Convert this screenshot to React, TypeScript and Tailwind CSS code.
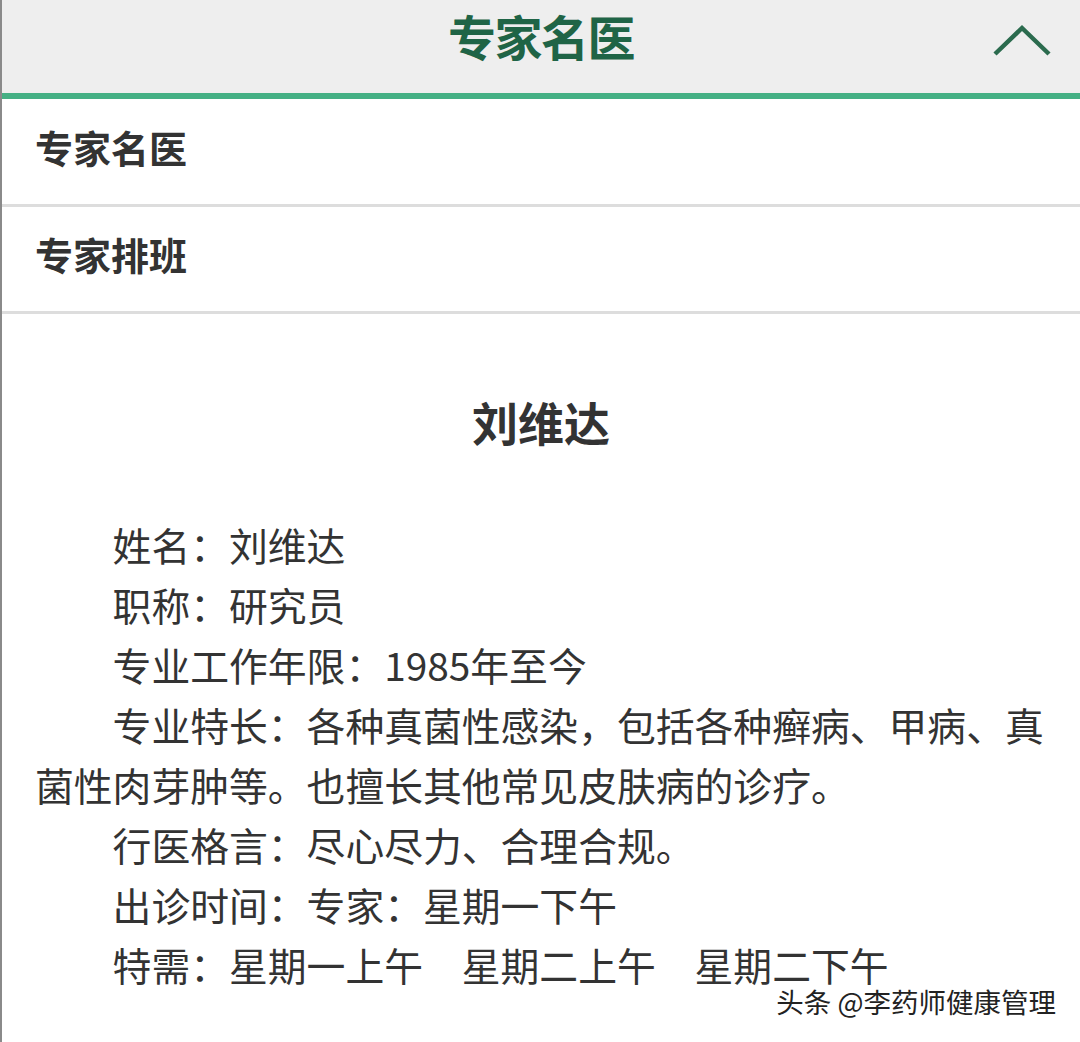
const font = { fontFamily: '"Noto Sans CJK SC", "Noto Sans", sans-serif' };

const Chevron = () => (
  <svg width="60" height="40" viewBox="0 0 60 40" className="text-[#2b6b4e]">
    <path d="M3 32 L30 6 L57 32" fill="none" stroke="currentColor" strokeWidth="4.5" />
  </svg>
);

const lines = [
  "姓名：刘维达",
  "职称：研究员",
  "专业工作年限：1985年至今",
  "专业特长：各种真菌性感染，包括各种癣病、甲病、真菌性肉芽肿等。也擅长其他常见皮肤病的诊疗。",
  "行医格言：尽心尽力、合理合规。",
  "出诊时间：专家：星期一下午",
  "特需：星期一上午\u3000星期二上午\u3000星期二下午",
];

const App = () => {
  return (
    <div
      className="relative w-[1080px] h-[1042px] bg-white border-l-2 border-[#8a8a8a] overflow-hidden"
      style={font}
    >
      <div className="relative flex items-center justify-center h-[99px] bg-[#eeeeee] border-b-[6px] border-[#45b084]">
        <h1 className="text-[48px] font-bold text-[#1f6446] tracking-[-1.5px] leading-none -mt-[24px]">
          专家名医
        </h1>
        <div className="absolute right-[28px] top-[22px]">
          <Chevron />
        </div>
      </div>

      <div className="flex items-center h-[108px] pl-[33px] border-b-[3px] border-[#dddddd]">
        <span className="text-[38px] font-bold text-[#333333] -mt-[10px]">专家名医</span>
      </div>
      <div className="flex items-center h-[107px] pl-[33px] border-b-[3px] border-[#dddddd]">
        <span className="text-[38px] font-bold text-[#333333] -mt-[12px]">专家排班</span>
      </div>

      <div className="pl-[33px] pr-[33px] pt-[73px]">
        <h2 className="text-center text-[46px] font-bold text-[#333333] leading-[69px]">
          刘维达
        </h2>
        <div className="mt-[58px] text-[38.8px] leading-[60px] text-[#333333]">
          {lines.map((l) => (
            <p key={l} className="indent-[2em]">
              {l}
            </p>
          ))}
        </div>
      </div>

      <div
        className="absolute right-[24px] bottom-[27px] text-[27.5px] text-[#222] leading-none"
        style={{ textShadow: "0 0 2px #fff, 0 0 2px #fff" }}
      >
        头条 @李药师健康管理
      </div>
    </div>
  );
};

export default App;
